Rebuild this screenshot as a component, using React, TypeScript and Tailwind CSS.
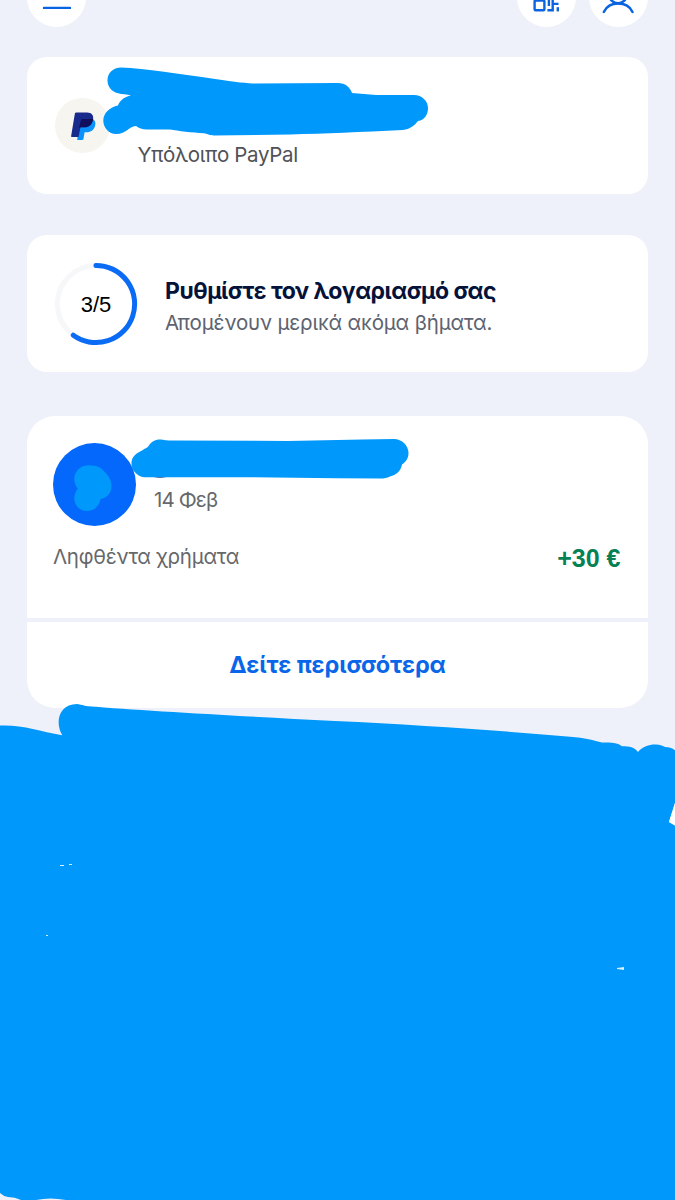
import type { ReactNode } from "react";

type CardProps = {
  className?: string;
  children: ReactNode;
};

const Card = ({ className = "", children }: CardProps) => {
  return <section className={`bg-white ${className}`}>{children}</section>;
};

const RoundButton = ({ label, children }: { label: string; children: ReactNode }) => {
  return (
    <button
      aria-label={label}
      className="flex h-[59px] w-[59px] items-center justify-center rounded-full bg-white text-[#0a63e0]"
    >
      {children}
    </button>
  );
};

const Header = () => {
  return (
    <header className="flex h-[27px] items-end justify-between overflow-hidden">
      <RoundButton label="Menu">
        <svg width="32" height="32" viewBox="0 0 32 32" stroke="currentColor" strokeWidth="2.4" strokeLinecap="round">
          <path d="M3 6.5h26M3 15.5h26M3 25.9h26" />
        </svg>
      </RoundButton>
      <div className="flex gap-[13px]">
        <RoundButton label="QR">
          <svg width="32" height="32" viewBox="0.8 0.4 32 32" fill="none" stroke="currentColor" strokeWidth="2.4">
            <rect x="4" y="4" width="9.6" height="9.6" rx="1" />
            <rect x="18" y="4" width="9.6" height="9.6" rx="1" />
            <rect x="4.400" y="18.900" width="9.8" height="9.8" rx="1" />
            <path d="M18.700 16v8.500M17.200 28.600h5.300v-6.500M22 22.300h6.300M22.500 18v4.500" />
            <path d="M27.600 25.600v4.200" />
          </svg>
        </RoundButton>
        <RoundButton label="Profile">
          <svg width="34" height="32" viewBox="0.5 0 34 32" fill="none" stroke="currentColor" strokeWidth="2.5" strokeLinecap="round">
            <circle cx="16.5" cy="12.2" r="9" />
            <path d="M2.300 30C5 24.500 10.400 21.600 16.500 21.600S28.500 24.500 31 30" />
          </svg>
        </RoundButton>
      </div>
    </header>
  );
};

const PayPalLogo = () => {
  return (
    <div className="h-[55px] w-[55px] rounded-full bg-[#f6f5f0]">
      <svg width="55" height="55" viewBox="55 98 55 55">
        <path
          d="M80 119H92.800C95.200 120.300 95.800 122.800 95.200 125.300C94.200 130 91 132.300 86.500 132.300H84.600L83.500 138.700Q83.200 140 82 140H77.200Z"
          fill="#0a93fb"
        />
        <path
          d="M76.400 112.600H87.200C91.500 112.600 93.800 115.400 93.100 119.200C92.200 124.500 89 127.300 84.500 127.300H80.500L78.500 137H71.800Q71 137 71.100 136.200L74.800 114Q75 112.600 76.400 112.600Z"
          fill="#182a8c"
        />
        <path
          d="M81.300 119H93.100C92.200 124.500 89 127.300 84.500 127.300H80.500L79 128Z"
          fill="#10105c"
        />
      </svg>
    </div>
  );
};

const StepRing = () => {
  return (
    <div className="grid h-[84px] w-[84px] place-items-center">
      <svg className="col-start-1 row-start-1" width="84" height="84" viewBox="0 0 84 84" fill="none" strokeWidth="5">
        <circle cx="42" cy="42" r="38.600" stroke="#f5f7f9" />
        <path d="M42 3.400A38.600 38.600 0 1 1 19.300 73.200" stroke="#0a6bf5" strokeLinecap="round" />
      </svg>
      <span className="col-start-1 row-start-1 mt-0.5 font-['Liberation_Sans',sans-serif] text-[22px] leading-6 text-black">
        3/5
      </span>
    </div>
  );
};

// Marker strokes painted over the private parts of the page
const Scribbles = () => {
  return (
    <svg className="absolute left-0 top-0" width="675" height="1200" viewBox="0 0 675 1200" fill="#0098fa">
      <path d="M121 67.500C145 68.500 180 74 215 79C235 82 248 83.500 256 83.500L338 83C345 83 350 87 352 93L376 95H414C422 95 428 101 428 108C428 114 425 120 418 121C414 126 410 129 403 130C360 132 325 133.500 290 134.500L214 135.500C209 135.500 207 133.500 204 133.300C192 132.500 178 131 170 129.500L147 129.500C142 129.500 139 128 136 126C128 126.500 127 134 116 134C109 134 103.300 128 103.300 120.500C103.300 113 110 107 118 105.500C120 100 125 96.500 131 95.500C127 94 122 94.500 118 93.200C111 91.500 107.500 86 107.500 80.500C107.500 73 113 67.500 121 67.500Z" />
      <path d="M148 446.700C151 442 155 439.500 160 439.500C163 439.500 165 440.500 170 440.500L288 441L362 439.500L394 439C402 439 408.500 445.500 408.500 453C408.500 458 406 462 402 464.500C401 471 396 475 390 476.500C387 478 384 478.600 381 478.600L337 478.300L250 477.300H144C137 476.500 131.500 470 131.500 464C131.500 453 141 452 148 446.700Z" />
      <path d="M154 477.300h12q-6 1.600-12 0" fill="#173f86" />
      <path d="M74.300 479C74.300 471 80.500 465.200 88.500 465.200C94 465.200 98 466 101 468.300C106 473 111.500 478 111.500 486C111.500 493 107 498 100.500 499C99.500 506 94 511 87 511C80 511 74.300 505.500 74.300 498.500C74.300 495 75.500 491.500 77.800 488.500C75.500 486 74.300 483 74.300 479Z" />
      <path d="M0 725.500C22 724.500 39 731 62.300 735.300C54.500 722 59 704 77 704C81 704.300 83 705.600 88 706.200C145 710.800 240 716 335 721C420 725 500 730.500 570 736.800C585 738 594 740.500 602 742.500C612 742.500 617 742.500 622 746.200C630 746.200 634 747 638 752C643 746 650 744.300 656 744.600C660 744.600 662 746 665 747C669 747.200 672 748 675 750.200V803L669 822L675 825.500V1200H66Q50 1196.800 36 1200H21Q15 1197 8 1197Q3 1196 0 1193Z" />
      <path d="M675 803L669 822L675 825.500Z" fill="#fff" />
      <g fill="#d9f0ff">
        <rect x="60" y="865" width="4" height="1" />
        <rect x="69" y="864" width="3" height="1" />
        <rect x="46" y="935" width="2" height="1" />
        <path d="M617 968l7-1v3l-7-1z" />
      </g>
    </svg>
  );
};

export default function App() {
  return (
    <div className="relative h-[1200px] w-[675px] overflow-hidden bg-[#eef1fa] px-[27px] font-['Inter','Noto_Sans',sans-serif]">
      <Header />

      <Card className="mt-[30px] flex h-[137px] rounded-[20px] pl-[28px] pt-[41px]">
        <PayPalLogo />
        <p className="ml-[27.500px] mt-[45px] text-[20.500px] leading-6 tracking-[-0.330px] text-[#505256]">
          Υπόλοιπο PayPal
        </p>
      </Card>

      <Card className="mt-[41px] flex h-[137px] items-center rounded-[20px] pl-[27px]">
        <StepRing />
        <div className="ml-[27px] mt-[6px]">
          <h2 className="text-[23px] font-bold leading-8 tracking-[-0.500px] text-[#05133a]">
            Ρυθμίστε τον λογαριασμό σας
          </h2>
          <p className="text-[20.500px] leading-8 tracking-[-0.170px] text-[#5d6370]">
            Απομένουν μερικά ακόμα βήματα.
          </p>
        </div>
      </Card>

      <Card className="mt-[44px] h-[292px] rounded-[28px]">
        <div className="h-[202px] px-[26px] pt-[27px]">
          <div className="flex">
            <div className="h-[83px] w-[83px] rounded-full bg-[#0368fb]" />
            <p className="ml-[18px] mt-[45px] text-[20.500px] leading-6 tracking-[-0.900px] text-[#66686b]">14 Φεβ</p>
          </div>
          <div className="mt-[13px] flex items-center justify-between">
            <p className="text-[20.500px] leading-8 tracking-[-0.280px] text-[#66686b]">Ληφθέντα χρήματα</p>
            <p className="mr-[1.500px] mt-[3px] font-['Liberation_Sans',sans-serif] text-[25px] font-bold leading-8 text-[#058154]">
              +30 €
            </p>
          </div>
        </div>
        <div className="h-1 bg-[#eef1fa]" />
        <button className="h-[86px] w-full text-[23.500px] font-bold tracking-[-0.100px] text-[#0a66e8]">
          Δείτε περισσότερα
        </button>
      </Card>

      <Scribbles />
    </div>
  );
}
